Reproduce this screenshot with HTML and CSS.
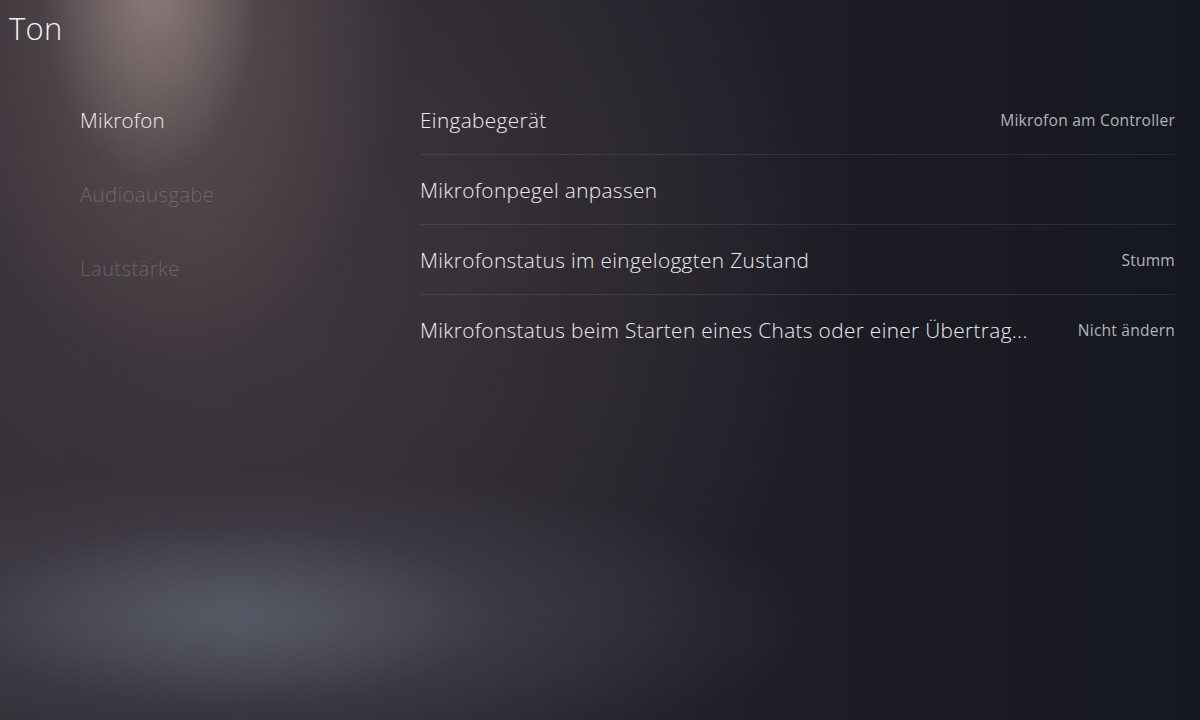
FILE: index.html
```html
<!DOCTYPE html>
<html lang="de">
<head>
<meta charset="utf-8">
<title>Ton</title>
<link rel="stylesheet" href="styles.css">
</head>
<body>
<div class="screen">
  <h1 class="title">Ton</h1>
  <div class="main">
    <nav class="nav">
      <div class="nav-item active">Mikrofon</div>
      <div class="nav-item">Audioausgabe</div>
      <div class="nav-item">Lautstärke</div>
    </nav>
    <div class="list">
      <div class="row">
        <span class="label">Eingabegerät</span>
        <span class="value">Mikrofon am Controller</span>
      </div>
      <div class="row">
        <span class="label">Mikrofonpegel anpassen</span>
      </div>
      <div class="row">
        <span class="label">Mikrofonstatus im eingeloggten Zustand</span>
        <span class="value">Stumm</span>
      </div>
      <div class="row last">
        <span class="label">Mikrofonstatus beim Starten eines Chats oder einer Übertrag...</span>
        <span class="value">Nicht ändern</span>
      </div>
    </div>
  </div>
</div>
</body>
</html>
```

FILE: styles.css
```css
* { box-sizing: border-box; }
html, body {
  margin: 0;
  padding: 0;
  width: 1200px;
  height: 720px;
  overflow: hidden;
}
body {
  font-family: "Open Sans", "Noto Sans", sans-serif;
  color: #e6e6e8;
  background-color: #181a23;
  background-image:
    radial-gradient(ellipse 110px 200px at 150px -20px, rgba(160,142,138,0.7), rgba(160,142,138,0) 100%),
    radial-gradient(ellipse 240px 380px at 170px 0px, rgba(120,104,102,0.6), rgba(120,104,102,0) 100%),
    radial-gradient(ellipse 260px 90px at 230px 615px, rgba(92,98,110,0.7), rgba(92,98,110,0) 100%),
    radial-gradient(ellipse 560px 150px at 260px 620px, rgba(78,78,90,0.75), rgba(78,78,90,0) 100%),
    radial-gradient(ellipse 620px 560px at 220px 260px, rgba(68,58,64,0.85), rgba(68,58,64,0) 100%),
    linear-gradient(90deg, #302c34 0%, #2c2a33 25%, #25232c 50%, #1d1c25 72%, #151820 100%);
}
.screen {
  width: 1200px;
  height: 720px;
  padding: 6px 25px 0 9px;
}
.title {
  margin: 0;
  font-size: 31px;
  font-weight: 300;
  letter-spacing: 0.3px;
  line-height: 44px;
  color: #f2f0f0;
}
.main {
  display: flex;
  margin-top: 35px;
}
.nav {
  flex: none;
  width: 411px;
  padding-left: 71px;
  display: flex;
  flex-direction: column;
}
.nav-item {
  height: 74px;
  line-height: 70px;
  font-size: 20.5px;
  font-weight: 300;
  letter-spacing: 0.3px;
  color: rgba(255,255,255,0.2);
}
.nav-item.active {
  color: #eeecec;
}
.list {
  flex: 1;
  min-width: 0;
  display: flex;
  flex-direction: column;
}
.row {
  height: 70px;
  display: flex;
  align-items: center;
  gap: 30px;
  border-bottom: 1px solid rgba(255,255,255,0.09);
}
.row.last { border-bottom: none; }
.label {
  flex: 1;
  min-width: 0;
  font-size: 20.8px;
  font-weight: 300;
  letter-spacing: 0.35px;
  color: #ececf0;
  white-space: nowrap;
}
.value {
  flex: none;
  font-size: 15.6px;
  font-weight: 400;
  letter-spacing: 0.2px;
  color: #b4b4b8;
  white-space: nowrap;
}
```
